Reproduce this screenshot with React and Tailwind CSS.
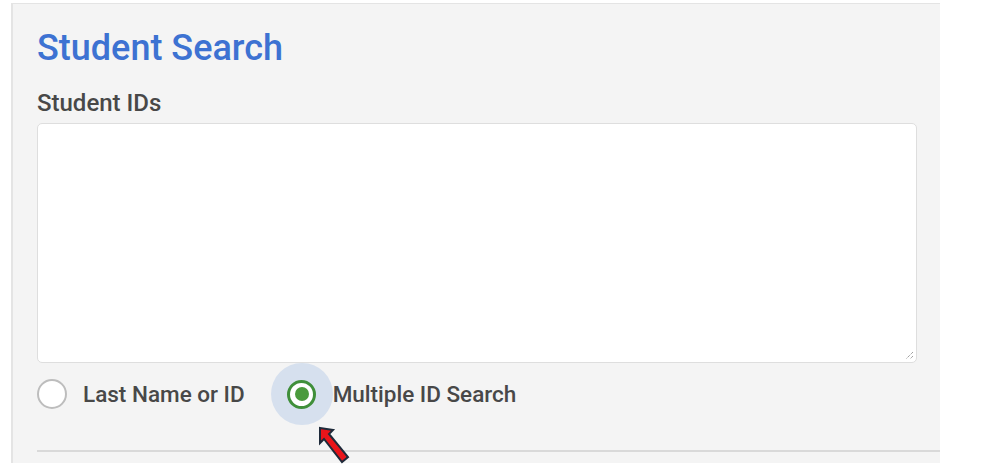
import React from "react";

const Radio = ({ checked, label, halo }) => (
  <label className="flex items-center gap-[16px] cursor-pointer">
    <span className="relative flex items-center justify-center w-[30px] h-[30px]">
      {halo && (
        <span className="absolute left-1/2 top-1/2 -translate-x-1/2 -translate-y-1/2 w-[62px] h-[62px] rounded-full bg-[#d6e0ee]" />
      )}
      {checked ? (
        <span className="relative w-[29px] h-[29px] rounded-full border-[3px] border-[#3f8f3a] bg-white flex items-center justify-center">
          <span className="w-[14px] h-[14px] rounded-full bg-[#4a9a3c]" />
        </span>
      ) : (
        <span className="relative w-[30px] h-[30px] rounded-full border-[2px] border-[#bdbdbd] bg-white" />
      )}
    </span>
    <span className="text-[22.5px] font-medium text-[#484848] leading-none">
      {label}
    </span>
  </label>
);

const App = () => {
  return (
    <div className="w-[981px] h-[469px] bg-white font-['Roboto',sans-serif] overflow-hidden">
      <div className="ml-[11px] mt-[3px] w-[929px] h-[460px] bg-[#f4f4f4] border-l-2 border-t border-[#e4e4e4] pl-[24px] pt-[26px] relative">
        <h1 className="text-[36px] font-medium text-[#3d72d2] leading-none">
          Student Search
        </h1>
        <div className="mt-[25px] text-[24px] font-medium text-[#484848] leading-none">
          Student IDs
        </div>
        <div className="mt-[8px] w-[880px] h-[240px] bg-white border border-[#dedede] rounded-[5px] relative">
          <svg
            className="absolute right-[2px] bottom-[2px]"
            width="10"
            height="10"
            viewBox="0 0 10 10"
          >
            <path d="M9 2 L2 9 M9 6 L6 9" stroke="#777" strokeWidth="1" strokeDasharray="1 1" />
          </svg>
        </div>
        <div className="mt-[16px] flex items-center gap-[42px]">
          <Radio label="Last Name or ID" />
          <Radio label="Multiple ID Search" checked halo />
        </div>
        <div className="mt-[41px] h-[2px] bg-[#d9d9d9]" />
        <svg
          className="absolute left-[304px] top-[421px]"
          width="36"
          height="42"
          viewBox="0 0 36 42"
        >
          <path
            d="M3 3 L16 5 L12 9 L31 32 L25 37 L7 14 L3 18 Z"
            fill="#e8141a"
            stroke="#1e2a3a"
            strokeWidth="2"
            strokeLinejoin="miter"
          />
        </svg>
      </div>
    </div>
  );
};

export default App;
